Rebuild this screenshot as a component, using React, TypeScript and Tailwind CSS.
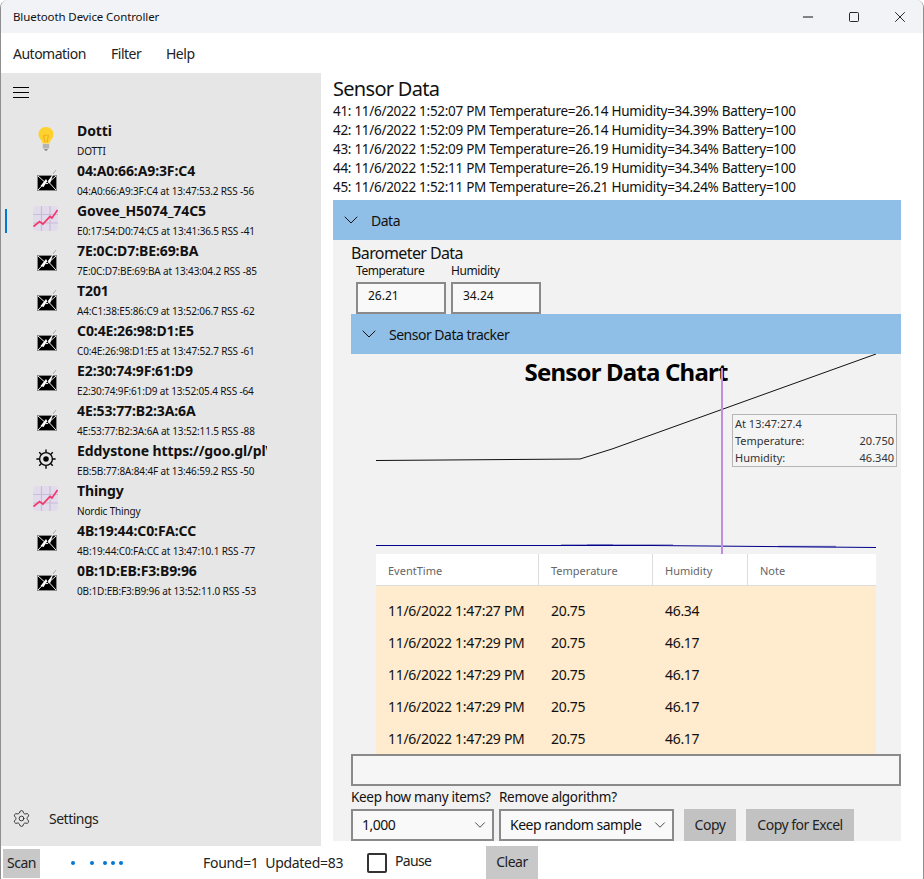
import React from "react";
import { ChevronDown, Minus, Settings, Square, X } from "lucide-react";

const Bulb = () => (
  <svg width="18" height="26" viewBox="0 0 18 26" className="-mt-[5px]">
    <path d="M9 1C4.500 1 1.500 4.300 1.500 8.300c0 2.800 1.400 4.400 2.600 6 .8 1 1.300 2 1.500 3.200h6.800c.2-1.200.7-2.200 1.500-3.200 1.200-1.600 2.600-3.200 2.600-6C16.500 4.300 13.500 1 9 1z" fill="#fdd22f" />
    <path d="M6.500 9.500 8 16.500M11.500 9.500 10 16.500M6.500 9.500c1 1 1.700-.5 2.500-.5s1.500 1.500 2.500.5" fill="none" stroke="#f2a71e" strokeWidth="1" />
    <path d="M5.800 18h6.400v4.500H5.800z" fill="#b5b5b5" />
    <path d="M7 23h4l-1 1.800H8z" fill="#8f8f8f" />
  </svg>
);

const Envelope = () => (
  <svg width="24" height="26" viewBox="0 0 24 26" className="mt-[2px]">
    <rect x="3.500" y="6.500" width="19" height="15" fill="#000" stroke="#8a8a8a" strokeWidth="1" />
    <path d="M4 7l9 8 9-8M4 21l6.500-7M22 21l-6.500-7" fill="none" stroke="#eee" strokeWidth="1" />
    <path d="M6.500 17l5.500-7 1.500 2.500 6-8-3.500 10-2.500-2.500L9.500 18z" fill="#fff" />
    <path d="M19 5l3-4" stroke="#aaa" strokeWidth="1" />
  </svg>
);

const ChartTile = () => (
  <svg width="25" height="25" viewBox="0 0 25 25" className="-mt-[5px]">
    <rect width="25" height="25" rx="3" fill="#e2dbec" />
    <path d="M8.500 0v25M17 0v25M0 8.500h25M0 17h25" stroke="#c9bdd6" strokeWidth="1.200" />
    <path d="M0.500 20.500l6-5 3.500 2.500 7-7.500 2 1.500 5.500-8" fill="none" stroke="#f2386c" strokeWidth="1.700" />
  </svg>
);

const Beacon = () => (
  <svg width="22" height="22" viewBox="0 0 24 24" className="-mt-[5px]">
    <circle cx="12" cy="12" r="7" fill="none" stroke="#000" strokeWidth="1.500" />
    <circle cx="12" cy="12" r="3" fill="#000" />
    <path d="M12 1.500v3M12 19.500v3M1.500 12h3M19.500 12h3M4.600 4.600l2.100 2.100M17.300 17.300l2.100 2.100M19.400 4.600l-2.100 2.100M6.700 17.300l-2.100 2.100" stroke="#000" strokeWidth="1.500" />
  </svg>
);

const devices = [
  { name: "Dotti", sub: "DOTTI", icon: <Bulb /> },
  { name: "04:A0:66:A9:3F:C4", sub: "04:A0:66:A9:3F:C4 at 13:47:53.2 RSS -56", icon: <Envelope /> },
  { name: "Govee_H5074_74C5", sub: "E0:17:54:D0:74:C5 at 13:41:36.5 RSS -41", icon: <ChartTile />, selected: true },
  { name: "7E:0C:D7:BE:69:BA", sub: "7E:0C:D7:BE:69:BA at 13:43:04.2 RSS -85", icon: <Envelope /> },
  { name: "T201", sub: "A4:C1:38:E5:86:C9 at 13:52:06.7 RSS -62", icon: <Envelope /> },
  { name: "C0:4E:26:98:D1:E5", sub: "C0:4E:26:98:D1:E5 at 13:47:52.7 RSS -61", icon: <Envelope /> },
  { name: "E2:30:74:9F:61:D9", sub: "E2:30:74:9F:61:D9 at 13:52:05.4 RSS -64", icon: <Envelope /> },
  { name: "4E:53:77:B2:3A:6A", sub: "4E:53:77:B2:3A:6A at 13:52:11.5 RSS -88", icon: <Envelope /> },
  { name: "Eddystone https://goo.gl/plV", sub: "EB:5B:77:8A:84:4F at 13:46:59.2 RSS -50", icon: <Beacon /> },
  { name: "Thingy", sub: "Nordic Thingy", icon: <ChartTile /> },
  { name: "4B:19:44:C0:FA:CC", sub: "4B:19:44:C0:FA:CC at 13:47:10.1 RSS -77", icon: <Envelope /> },
  { name: "0B:1D:EB:F3:B9:96", sub: "0B:1D:EB:F3:B9:96 at 13:52:11.0 RSS -53", icon: <Envelope /> },
];

const logLines = [
  "41: 11/6/2022 1:52:07 PM Temperature=26.14 Humidity=34.39% Battery=100",
  "42: 11/6/2022 1:52:09 PM Temperature=26.14 Humidity=34.39% Battery=100",
  "43: 11/6/2022 1:52:09 PM Temperature=26.19 Humidity=34.34% Battery=100",
  "44: 11/6/2022 1:52:11 PM Temperature=26.19 Humidity=34.34% Battery=100",
  "45: 11/6/2022 1:52:11 PM Temperature=26.21 Humidity=34.24% Battery=100",
];

const rows = [
  ["11/6/2022 1:47:27 PM", "20.75", "46.34"],
  ["11/6/2022 1:47:29 PM", "20.75", "46.17"],
  ["11/6/2022 1:47:29 PM", "20.75", "46.17"],
  ["11/6/2022 1:47:29 PM", "20.75", "46.17"],
  ["11/6/2022 1:47:29 PM", "20.75", "46.17"],
];

const Sidebar = () => (
  <aside className="w-[320px] bg-[#e6e6e6] flex flex-col">
    <div className="h-[48px] pl-[12px] pt-[14px] shrink-0">
      <div className="w-4 flex flex-col gap-[4px]">
        <div className="h-px bg-black" />
        <div className="h-px bg-black" />
        <div className="h-px bg-black" />
      </div>
    </div>
    <div className="flex-1">
      {devices.map((d) => (
        <div key={d.sub} className="h-10 flex items-center">
          <div className={`w-[2px] h-6 ml-[4px] ${d.selected ? "bg-[#0078d4]" : ""}`} />
          <div className="w-[25px] ml-[26px] flex justify-center">{d.icon}</div>
          <div className="w-[190px] ml-[19px] overflow-hidden">
            <div className="h-5 leading-5 text-[14px] font-bold whitespace-nowrap text-[#111] tracking-[-0.1px]">{d.name}</div>
            <div className="h-5 leading-5 text-[10px] whitespace-nowrap text-[#111] tracking-[-0.15px]">{d.sub}</div>
          </div>
        </div>
      ))}
    </div>
    <div className="h-10 mb-[8px] flex items-center pl-[11px] text-[14px] text-[#222] tracking-[-0.5px]">
      <Settings size={19} strokeWidth={1.1} />
      <span className="ml-[18px]">Settings</span>
    </div>
  </aside>
);

const Chart = () => (
  <div className="relative h-[200px]">
    <div className="ml-[25px] w-[500px] pt-[3px] text-center text-[24px] leading-[30px] font-bold text-black tracking-[-0.8px]">
      Sensor Data Chart
    </div>
    <svg width="550" height="200" className="absolute left-0 top-0">
      <path d="M25 106.500 229 105 261 95 525 0" fill="none" stroke="#111" strokeWidth="1" />
      <path d="M25 191.500H300L525 193.500" fill="none" stroke="#00008b" strokeWidth="1" />
      <path d="M210 190.500h26" stroke="#00008b" strokeOpacity="0.3" strokeWidth="1" />
      <path d="M236 190.500h26" stroke="#00008b" strokeOpacity="0.5" strokeWidth="1" />
      <path d="M262 190.500h60" stroke="#00008b" strokeOpacity="0.3" strokeWidth="1" />
      <path d="M427 192.500h58" stroke="#00008b" strokeOpacity="0.4" strokeWidth="1.500" />
      <path d="M371 14v186" stroke="#c08fe0" strokeWidth="2" />
    </svg>
    <div className="absolute left-[381px] top-[60px] w-[165px] h-[53px] border border-[#b5b5b5] bg-[#f4f4f4] px-[2px] text-[11px] leading-[17px] text-[#333]">
      <div>At 13:47:27.4</div>
      <div className="flex justify-between">
        <span>Temperature:</span>
        <span>20.750</span>
      </div>
      <div className="flex justify-between">
        <span>Humidity:</span>
        <span>46.340</span>
      </div>
    </div>
  </div>
);

const DataTable = () => (
  <div className="ml-[25px] w-[500px]">
    <div className="h-8 flex bg-white border-b border-[#dcdcdc] text-[11px] text-[#666]">
      <div className="w-[163px] pl-3 pt-1 flex items-center border-r border-[#dcdcdc]">EventTime</div>
      <div className="w-[114px] pl-3 pt-1 flex items-center border-r border-[#dcdcdc]">Temperature</div>
      <div className="w-[95px] pl-3 pt-1 flex items-center border-r border-[#dcdcdc]">Humidity</div>
      <div className="w-[128px] pl-3 pt-1 flex items-center">Note</div>
    </div>
    <div className="h-[168px] overflow-hidden bg-[#ffebcd] pt-[8px] text-[14px] text-[#111] tracking-[-0.3px]">
      {rows.map((r, i) => (
        <div key={i} className="h-8 flex items-center">
          <div className="w-[162px] pl-3">{r[0]}</div>
          <div className="w-[114px] pl-[13px]">{r[1]}</div>
          <div className="w-[95px] pl-[13px]">{r[2]}</div>
        </div>
      ))}
    </div>
  </div>
);

const SelectBox = ({ label, w, gap }: { label: string; w: string; gap: string }) => (
  <div className={`${w} ${gap} h-8 border-2 border-[#8a8a8a] bg-[#f9f9f9] flex items-center justify-between pl-[9px] pr-[3px] text-[14px] text-[#111] tracking-[-0.5px]`}>
    <span className="-mt-[2px]">{label}</span>
    <ChevronDown size={18} strokeWidth={1} />
  </div>
);

const MainPanel = () => (
  <main className="w-[568px] flex flex-col">
    <div className="h-[127px] shrink-0 pt-[4px]">
      <h1 className="text-[20px] leading-[23px] font-normal text-[#111] tracking-[-0.7px]">Sensor Data</h1>
      <div className="pt-[2px]">
        {logLines.map((line) => (
          <div key={line} className="h-[19px] leading-[19px] text-[13.5px] text-[#111] whitespace-nowrap tracking-[-0.29px]">
            {line}
          </div>
        ))}
      </div>
    </div>
    <div className="h-[641px] bg-[#f2f2f2] overflow-hidden">
      <div className="h-10 bg-[#8fbfe6] flex items-center pl-[6px] text-[14px] text-[#111] tracking-[-0.5px]">
        <ChevronDown size={24} strokeWidth={1} />
        <span className="ml-2">Data</span>
      </div>
      <div className="pl-[18px]">
        <div className="h-[23px] pt-[2px] text-[16px] leading-[22px] text-[#111] tracking-[-0.6px]">Barometer Data</div>
        <div className="flex pl-[5px] gap-[5px]">
          <div className="w-[90px]">
            <div className="h-[19px] text-[12px] leading-4 text-[#111] tracking-[-0.4px] whitespace-nowrap">Temperature</div>
            <div className="h-8 border-2 border-[#8a8a8a] bg-[#f9f9f9] pl-[10px] pb-[5px] flex items-center text-[12px] text-[#111]">26.21</div>
          </div>
          <div className="w-[90px]">
            <div className="h-[19px] text-[12px] leading-4 text-[#111] tracking-[-0.4px] whitespace-nowrap">Humidity</div>
            <div className="h-8 border-2 border-[#8a8a8a] bg-[#f9f9f9] pl-[10px] pb-[5px] flex items-center text-[12px] text-[#111]">34.24</div>
          </div>
        </div>
        <div className="h-10 bg-[#8fbfe6] flex items-center pl-[6px] text-[14px] text-[#111] tracking-[-0.5px]">
          <ChevronDown size={24} strokeWidth={1} />
          <span className="ml-2">Sensor Data tracker</span>
        </div>
        <Chart />
        <DataTable />
        <div className="w-[550px] h-8 border-2 border-[#8a8a8a] bg-[#f6f6f6]" />
        <div className="h-[23px] flex items-center text-[13.5px] text-[#111] tracking-[-0.3px]">
          <span className="w-[148px] whitespace-nowrap">Keep how many items?</span>
          <span>Remove algorithm?</span>
        </div>
        <div className="flex">
          <SelectBox label="1,000" w="w-[143px]" gap="" />
          <SelectBox label="Keep random sample" w="w-[175px]" gap="ml-[5px]" />
          <button className="ml-[10px] w-[52px] h-8 pb-[2px] bg-[#c2c2c2] text-[14px] text-[#222] tracking-[-0.5px]">Copy</button>
          <button className="ml-[10px] w-[108px] h-8 pb-[2px] bg-[#c2c2c2] text-[14px] text-[#222] tracking-[-0.5px]">Copy for Excel</button>
        </div>
      </div>
    </div>
  </main>
);

const StatusBar = () => (
  <footer className="h-[33px] shrink-0 bg-white flex items-center text-[14px] text-[#222] tracking-[-0.3px]">
    <button className="ml-[2px] w-[37px] h-[29px] mt-[2px] pb-[2px] bg-[#c8c8c8] text-[14px] tracking-[-0.5px]">Scan</button>
    <div className="w-[163px] flex items-center pl-[31px]">
      <span className="w-1 h-1 rounded-full bg-[#0078d4]" />
      <span className="ml-[15px] w-1 h-1 rounded-full bg-[#0078d4]" />
      <span className="ml-[9px] w-1 h-1 rounded-full bg-[#0078d4]" />
      <span className="ml-1 w-1 h-1 rounded-full bg-[#0078d4]" />
      <span className="ml-1 w-1 h-1 rounded-full bg-[#0078d4]" />
    </div>
    <span className="w-[164px] whitespace-nowrap">Found=1&nbsp; Updated=83</span>
    <span className="w-[20px] h-[20px] border-2 border-[#333] bg-white rounded-[2px]" />
    <span className="ml-2 w-[91px] -mt-[5px] tracking-[-0.7px]">Pause</span>
    <button className="w-[52px] h-[33px] pb-[2px] bg-[#c8c8c8] text-[14px] tracking-[-0.5px]">Clear</button>
  </footer>
);

export default function App() {
  return (
    <div className="w-[924px] h-[879px] flex flex-col overflow-hidden bg-white border-l border-r border-[#8f8f8f] rounded-t-lg font-['Noto_Sans',sans-serif]">
      <header className="h-[33px] shrink-0 bg-[#f2f3f7] flex items-center justify-between">
        <span className="ml-[12px] text-[11.500px] text-[#111] tracking-[-0.1px]">Bluetooth Device Controller</span>
        <div className="flex items-center text-[#111]">
          <Minus size={16} strokeWidth={1.5} className="mr-[32px]" />
          <Square size={12} strokeWidth={1.8} className="mr-[31px]" />
          <X size={18} strokeWidth={1.2} className="mr-[14px]" />
        </div>
      </header>
      <nav className="h-10 shrink-0 bg-white flex items-center pl-[12px] text-[14px] text-[#222] tracking-[-0.5px]">
        <span className="w-[98px]">Automation</span>
        <span className="w-[55px]">Filter</span>
        <span>Help</span>
      </nav>
      <div className="h-[773px] flex gap-3 shrink-0">
        <Sidebar />
        <MainPanel />
      </div>
      <StatusBar />
    </div>
  );
}
